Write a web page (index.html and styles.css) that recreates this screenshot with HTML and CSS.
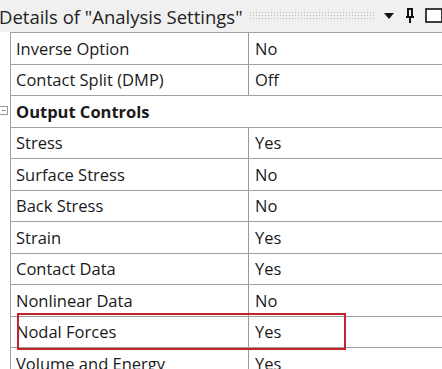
FILE: index.html
```html
<!DOCTYPE html>
<html lang="en">
<head>
    <meta charset="UTF-8">
    <title>Details of "Analysis Settings"</title>
    <link rel="stylesheet" href="styles.css">
</head>
<body>

    <!-- Panel Header -->
    <div class="panel-header">
        <span class="panel-title">Details of "Analysis Settings"</span>
        <span class="grip"></span>
        <span class="header-icons">
            <svg width="12" height="8" viewBox="0 0 12 8"><path d="M1 1h10L6 7z" fill="#111"/></svg>
            <svg width="12" height="16" viewBox="0 0 12 16"><path d="M3 1h6M4 1v8M8 1v8M2 9h8M6 9v6" stroke="#111" stroke-width="2" fill="none"/></svg>
            <svg width="17" height="16" viewBox="0 0 17 16"><rect x="1" y="1" width="16" height="13" stroke="#111" stroke-width="1.6" fill="#fff"/></svg>
        </span>
    </div>

    <!-- Details Grid -->
    <div class="details">
        <div class="gutter"></div>
        <div class="cell name">Inverse Option</div><div class="cell value">No</div>

        <div class="gutter"></div>
        <div class="cell name">Contact Split (DMP)</div><div class="cell value">Off</div>

        <div class="gutter"><span class="toggle">&minus;</span></div>
        <div class="cell group">Output Controls</div>

        <div class="gutter"></div>
        <div class="cell name">Stress</div><div class="cell value">Yes</div>

        <div class="gutter"></div>
        <div class="cell name">Surface Stress</div><div class="cell value">No</div>

        <div class="gutter"></div>
        <div class="cell name">Back Stress</div><div class="cell value">No</div>

        <div class="gutter"></div>
        <div class="cell name">Strain</div><div class="cell value">Yes</div>

        <div class="gutter"></div>
        <div class="cell name">Contact Data</div><div class="cell value">Yes</div>

        <div class="gutter"></div>
        <div class="cell name">Nonlinear Data</div><div class="cell value">No</div>

        <div class="gutter"></div>
        <div class="cell name highlight">Nodal Forces<span class="mark"></span></div><div class="cell value">Yes</div>

        <div class="gutter"></div>
        <div class="cell name">Volume and Energy</div><div class="cell value">Yes</div>
    </div>

</body>
</html>
```

FILE: styles.css
```css
/* General Styles */
* {
    margin: 0;
    padding: 0;
    box-sizing: border-box;
}

body {
    font-family: 'Open Sans', sans-serif;
    background-color: #fff;
    color: #1a1a1a;
    width: 442px;
    overflow: hidden;
}

/* Panel Header */
.panel-header {
    display: flex;
    align-items: center;
    height: 32px;
    background-color: #f0f0f0;
}

.panel-title {
    font-size: 18.5px;
    color: #222;
    margin-left: -1px;
    white-space: nowrap;
}

.grip {
    flex: 1;
    height: 10px;
    margin: 0 8px 0 6px;
    background-image: radial-gradient(circle, #b8b8b8 0.8px, transparent 1px);
    background-size: 3px 3px;
}

.header-icons {
    display: flex;
    align-items: center;
    gap: 9px;
}

/* Details Grid */
.details {
    display: grid;
    grid-template-columns: 11px 238px 1fr;
    grid-auto-rows: 31.5px;
}

.gutter {
    background-color: #fff;
    border-right: 1px solid #a0a0a0;
    display: flex;
    align-items: center;
}

.toggle {
    width: 8px;
    height: 9px;
    border: 1px solid #999;
    border-left: none;
    font-size: 9px;
    line-height: 7px;
    text-align: center;
    color: #555;
}

.cell {
    font-size: 16.5px;
    padding-left: 5px;
    display: flex;
    align-items: center;
    border-top: 1px solid #a0a0a0;
    white-space: nowrap;
}

.name {
    border-right: 1px solid #999;
}

.value {
    padding-left: 6px;
}

.group {
    grid-column: 2 / 4;
    font-weight: bold;
}

/* Red highlight box */
.highlight {
    position: relative;
}

.mark {
    position: absolute;
    left: 6px;
    top: -4px;
    width: 329px;
    height: 37px;
    border: 2px solid #c4232b;
}
```
